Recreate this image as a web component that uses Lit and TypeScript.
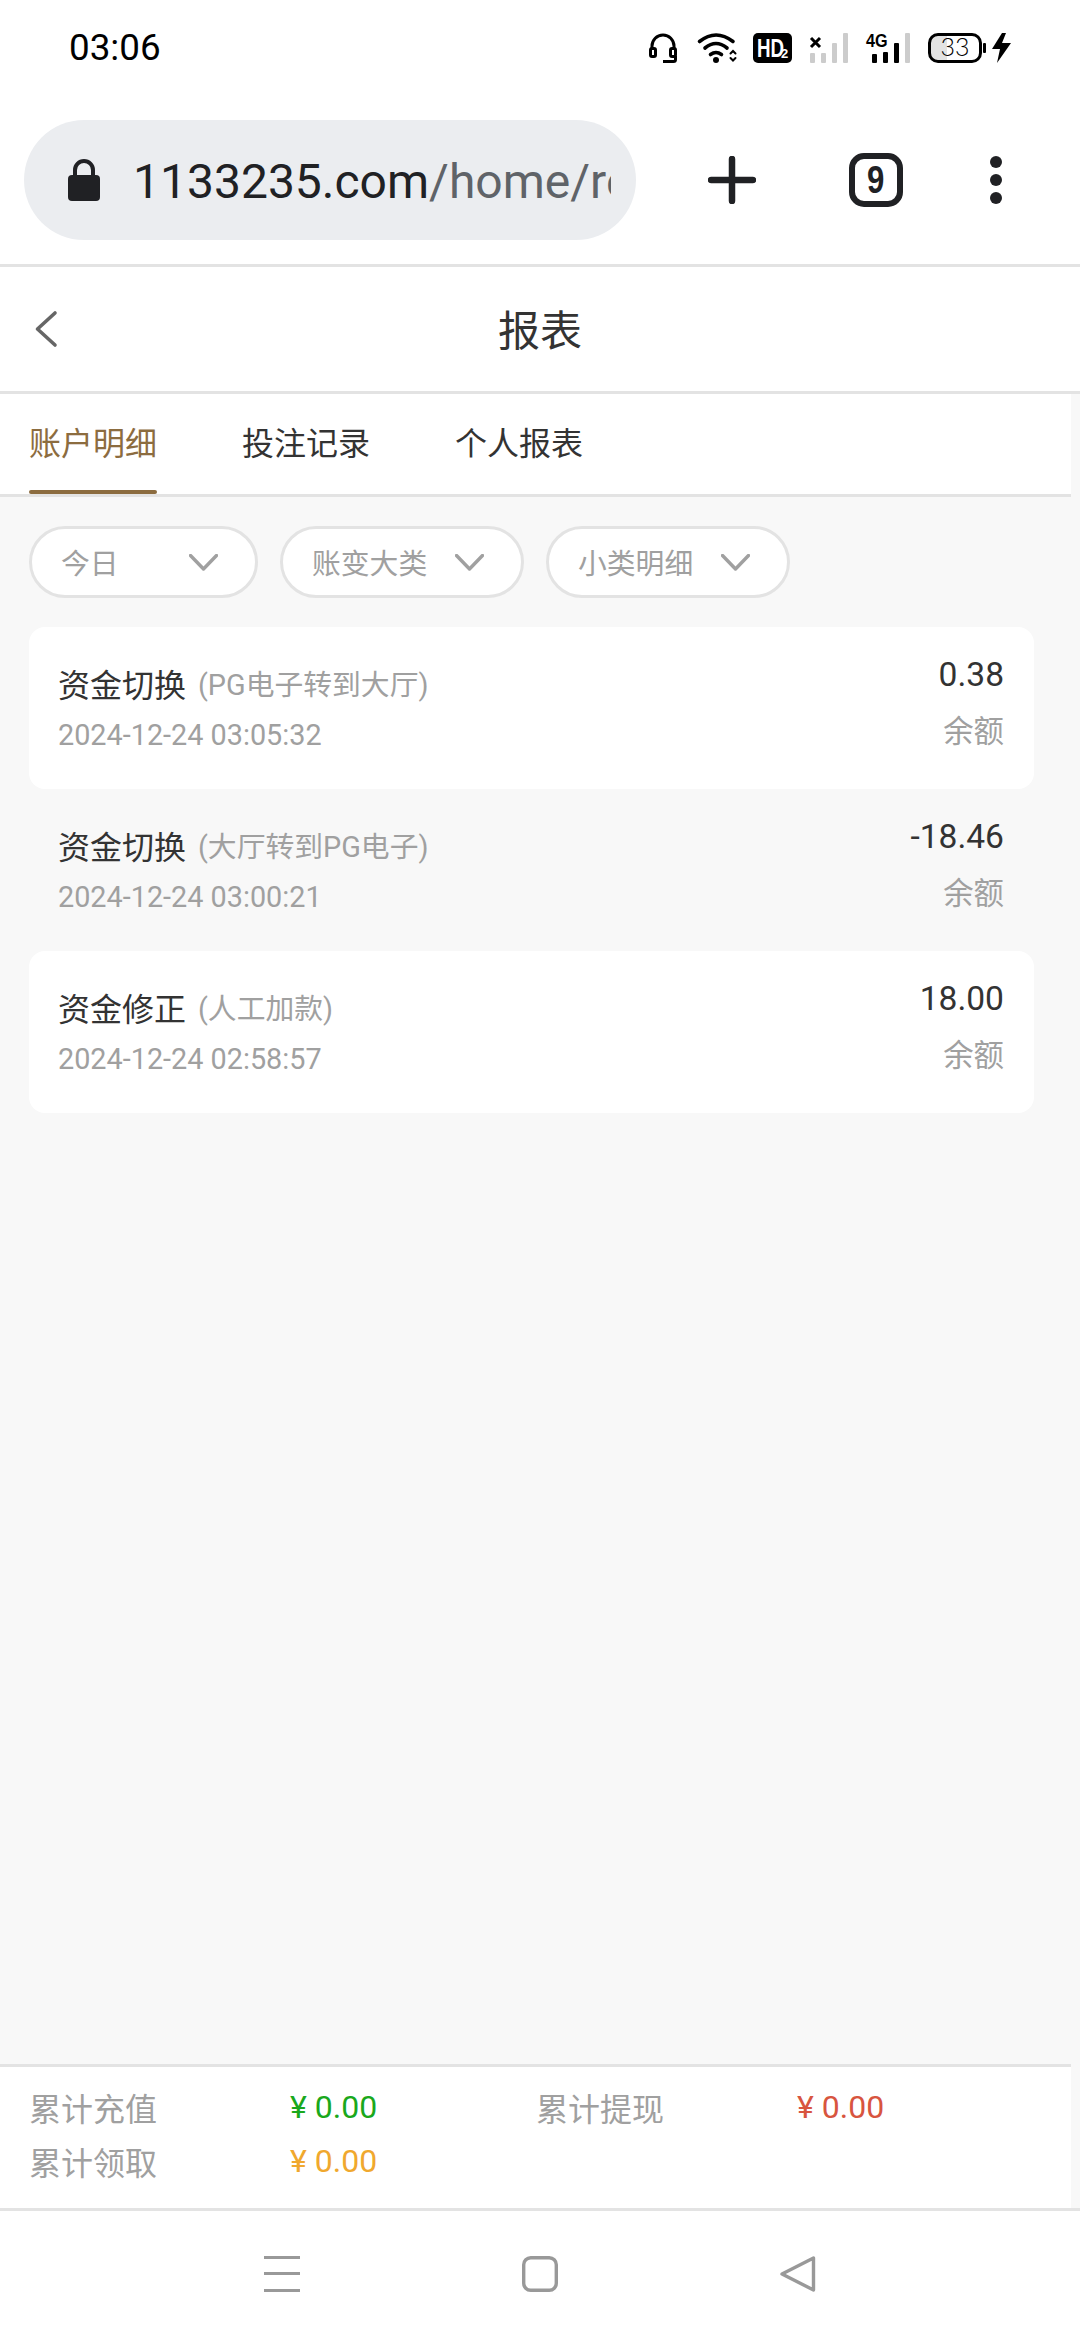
import { LitElement, html, css } from 'lit';
import { customElement, state } from 'lit/decorators.js';

const chevron = html`<svg class="chevron" viewBox="0 0 29 17" fill="none">
  <path d="M1.5 1.5 14.5 15 27.5 1.5" stroke="#a0a0a0" stroke-width="3.4" stroke-linejoin="round" stroke-linecap="round" />
</svg>`;

@customElement('app-root')
export class AppRoot extends LitElement {
    @state() tabs = ['账户明细', '投注记录', '个人报表'];
    @state() activeTab = 0;
    @state() filters = ['今日', '账变大类', '小类明细'];

    @state() records = [
        { title: '资金切换', note: '(PG电子转到大厅)', time: '2024-12-24 03:05:32', amount: '0.38', striped: true },
        { title: '资金切换', note: '(大厅转到PG电子)', time: '2024-12-24 03:00:21', amount: '-18.46', striped: false },
        { title: '资金修正', note: '(人工加款)', time: '2024-12-24 02:58:57', amount: '18.00', striped: true },
    ];

    @state() totals = [
        { label: '累计充值', value: '¥ 0.00', tone: 'green' },
        { label: '累计提现', value: '¥ 0.00', tone: 'red' },
        { label: '累计领取', value: '¥ 0.00', tone: 'orange' },
    ];

    static styles = css`
        :host {
            display: flex;
            flex-direction: column;
            width: 1080px;
            height: 2340px;
            overflow: hidden;
            background: #f8f8f8;
            color: #333;
            font-family: Roboto, "Noto Sans CJK SC", sans-serif;
        }

        /* system status bar */
        .status {
            display: flex;
            justify-content: space-between;
            height: 120px;
            box-sizing: border-box;
            padding: 33px 68px 0 69px;
            background: #fff;
            color: #000;
        }
        .time {
            font-size: 36.8px;
            line-height: 30px;
        }
        .status-icons {
            display: flex;
            gap: 16px;
            height: 30px;
        }
        .status-icons svg {
            display: block;
            height: 30px;
            overflow: visible;
        }
        .icon-headset { width: 33px; }
        .icon-wifi { width: 39px; }
        .icon-hd { width: 39px; }
        .icon-sim { width: 42px; }
        .icon-lte { width: 46px; }
        .icon-battery { width: 84px; }
        .narrow {
            font-family: "Liberation Sans", sans-serif;
            font-weight: 700;
        }
        .level {
            font-family: Lato, Roboto, sans-serif;
            font-weight: 300;
        }

        /* browser toolbar */
        .toolbar {
            display: flex;
            align-items: center;
            height: 147px;
            box-sizing: border-box;
            padding: 0 0 24px 24px;
            background: #fff;
            border-bottom: 3px solid #e3e3e3;
        }
        .address {
            display: flex;
            align-items: center;
            flex: none;
            width: 612px;
            height: 120px;
            box-sizing: border-box;
            padding-left: 44px;
            border-radius: 60px;
            background: #ebedf0;
        }
        .lock {
            flex: none;
            width: 32px;
            height: 42px;
            margin-right: 33px;
        }
        .url {
            width: 478px;
            padding-top: 3px;
            overflow: hidden;
            white-space: nowrap;
            font-size: 48px;
            color: #202124;
        }
        .url span {
            color: #5f6368;
        }
        .action {
            display: flex;
            align-items: center;
            justify-content: center;
            flex: none;
            width: 144px;
        }
        .action.first {
            margin-left: 24px;
        }
        .action.more {
            width: 96px;
        }
        .tab-count {
            display: flex;
            align-items: center;
            justify-content: center;
            width: 54px;
            height: 54px;
            box-sizing: border-box;
            border: 6px solid #202124;
            border-radius: 15px;
            color: #202124;
            font-family: "Liberation Sans", sans-serif;
            font-size: 38px;
            font-weight: 700;
            line-height: 1;
        }
        .tab-count span {
            display: block;
            transform: scaleX(0.82);
        }

        /* page header */
        .header {
            display: grid;
            grid-template-columns: 1fr auto 1fr;
            align-items: center;
            height: 127px;
            box-sizing: border-box;
            background: #fff;
            border-bottom: 3px solid #e3e3e3;
        }
        .back {
            display: block;
            width: 24px;
            height: 38px;
            margin-left: 34px;
        }
        .title {
            padding-bottom: 4px;
            font-size: 42px;
        }

        /* tabs */
        .tabs {
            display: flex;
            gap: 85px;
            width: 1071px;
            height: 103px;
            box-sizing: border-box;
            padding-left: 29px;
            background: #fff;
            border-bottom: 3px solid #e3e3e3;
        }
        .tab {
            display: flex;
            flex-direction: column;
            width: 128px;
            font-size: 32px;
        }
        .tab-label {
            flex: 1;
            display: flex;
            align-items: center;
            padding-bottom: 2px;
        }
        .tab::after {
            content: "";
            height: 4px;
            border-radius: 2px;
        }
        .tab.active {
            color: #8c6c3f;
        }
        .tab.active::after {
            background: #8c6c3f;
        }

        /* filter pills */
        .filters {
            display: flex;
            gap: 22px;
            padding: 29px 0 0 29px;
        }
        .filter {
            display: flex;
            align-items: center;
            justify-content: space-between;
            width: 244px;
            height: 72px;
            box-sizing: border-box;
            padding: 0 37px 0 29px;
            border: 3px solid #e3e3e3;
            border-radius: 36px;
            background: #fff;
            color: #a0a0a0;
            font-size: 28.8px;
        }
        .filter span {
            padding-bottom: 2px;
        }
        .filter.short {
            width: 229px;
        }
        .chevron {
            display: block;
            width: 29px;
            height: 17px;
        }

        /* record list */
        .list {
            flex: 1;
            width: 1005px;
            padding: 29px 0 0 29px;
        }
        .card {
            display: flex;
            justify-content: space-between;
            height: 162px;
            box-sizing: border-box;
            padding: 22px 30px 22px 29px;
            border-radius: 16px;
        }
        .card.striped {
            background: #fff;
        }
        .info {
            padding-top: 8px;
        }
        .info-title {
            display: flex;
            align-items: center;
            gap: 12px;
            height: 52px;
            font-size: 32px;
        }
        .note {
            padding-bottom: 2px;
            color: #a0a0a0;
            font-size: 28.8px;
        }
        .time-stamp {
            color: #a0a0a0;
            font-size: 28.8px;
            line-height: 52px;
        }
        .money {
            text-align: right;
        }
        .amount {
            font-size: 33.6px;
            line-height: 52px;
        }
        .balance {
            color: #a0a0a0;
            font-size: 30.4px;
            line-height: 62px;
        }

        /* totals */
        .totals {
            border-bottom: 3px solid #e3e3e3;
        }
        .totals-grid {
            display: grid;
            grid-template-columns: 261px 246px 261px 1fr;
            grid-auto-rows: 54px;
            align-items: center;
            box-sizing: border-box;
            width: 1071px;
            padding: 13px 0 20px 29px;
            border-top: 3px solid #e3e3e3;
            background: #fff;
            font-size: 32px;
            color: #a0a0a0;
        }
        .green { color: #1aa81c; }
        .red { color: #d8553f; }
        .orange { color: #f0a82e; }

        /* system navigation */
        .nav {
            display: flex;
            justify-content: center;
            align-items: center;
            gap: 222px;
            height: 129px;
            box-sizing: border-box;
            padding-bottom: 3px;
            background: #fff;
        }
        .nav svg {
            display: block;
            width: 36px;
            height: 36px;
        }
    `;

    renderStatusIcons() {
        return html`<div class="status-icons">
            <svg class="icon-headset" viewBox="0 0 33 30" fill="none" stroke="#000" stroke-width="3">
                <path d="M3 17V13a11 11 0 0 1 22 0v4" />
                <rect x="1.5" y="15.5" width="5" height="8" rx="1.5" />
                <rect x="21.5" y="15.5" width="5" height="8" rx="1.5" />
                <path d="M14 28.5h10.500a2 2 0 0 0 2-2V23" />
            </svg>
            <svg class="icon-wifi" viewBox="0 0 39 30" fill="none" stroke="#000" stroke-linecap="round">
                <path d="M1.5 8.5Q18-4.5 35 8.5" stroke-width="3.6" />
                <path d="M7 15Q18 6 29 15" stroke-width="3.6" />
                <path d="M12.5 21.5Q18 17.5 23.5 21.5" stroke-width="3.6" />
                <circle cx="18" cy="27" r="3" fill="#000" stroke="none" />
                <path d="M32.5 20.5 35 18l2.5 2.5M32.5 25 35 27.5 37.5 25" stroke-width="2" />
            </svg>
            <svg class="icon-hd" viewBox="0 0 39 30">
                <rect width="39" height="30" rx="5" fill="#000" />
                <text class="narrow" transform="translate(4 24) scale(0.75 1)" fill="#fff" font-size="25">HD</text>
                <text class="narrow" x="28" y="24.5" fill="#fff" font-size="13">2</text>
            </svg>
            <svg class="icon-sim" viewBox="0 0 42 30">
                <g fill="#ccc">
                    <rect x="2" y="20" width="5" height="10" rx="1" />
                    <rect x="13" y="20" width="5" height="10" rx="1" />
                    <rect x="24" y="10" width="5" height="20" rx="1" />
                    <rect x="35" y="0" width="5" height="30" rx="1" />
                </g>
                <path d="M3 5l9 9M12 5l-9 9" stroke="#000" stroke-width="3" />
            </svg>
            <svg class="icon-lte" viewBox="-1 0 46 30">
                <text class="narrow" transform="translate(-1 14) scale(0.9 1)" fill="#000" font-size="18">4G</text>
                <g fill="#000">
                    <rect x="5" y="21" width="5" height="9" rx="1" />
                    <rect x="16" y="19" width="5" height="11" rx="1" />
                    <rect x="27" y="10" width="5" height="20" rx="1" />
                </g>
                <rect x="38" y="0" width="5" height="30" rx="1" fill="#ccc" />
            </svg>
            <svg class="icon-battery" viewBox="0 0 84 30">
                <path d="M10 1.5H19V28.5H10a8 8 0 0 1-8-8V9.5a8 8 0 0 1 8-8Z" fill="#e3e3e3" />
                <rect x="1.5" y="1.5" width="51" height="27" rx="8.5" fill="none" stroke="#000" stroke-width="3" />
                <rect x="55" y="10" width="3" height="10" rx="1" fill="#000" />
                <text class="level" x="27" y="23" fill="#000" font-size="25" text-anchor="middle">33</text>
                <path d="M74 0 64 16h8L69 30 83 10H74L78 0Z" fill="#000" />
            </svg>
        </div>`;
    }

    render() {
        return html`
            <div class="status">
                <div class="time">03:06</div>
                ${this.renderStatusIcons()}
            </div>

            <div class="toolbar">
                <div class="address">
                    <svg class="lock" viewBox="0 0 32 42">
                        <path d="M7 19V11a9 9 0 0 1 18 0v8" fill="none" stroke="#202124" stroke-width="4" />
                        <rect y="16" width="32" height="26" rx="4" fill="#202124" />
                    </svg>
                    <div class="url">1133235.com<span>/home/report</span></div>
                </div>
                <div class="action first">
                    <svg width="48" height="48" viewBox="0 0 48 48">
                        <path d="M24 3v42M3 24h42" stroke="#202124" stroke-width="6.5" stroke-linecap="round" />
                    </svg>
                </div>
                <div class="action"><div class="tab-count"><span>9</span></div></div>
                <div class="action more">
                    <svg width="12" height="48" viewBox="0 0 12 48" fill="#202124">
                        <circle cx="6" cy="6" r="6" />
                        <circle cx="6" cy="24" r="6" />
                        <circle cx="6" cy="42" r="6" />
                    </svg>
                </div>
            </div>

            <div class="header">
                <svg class="back" viewBox="0 0 24 38" fill="none">
                    <path d="M21 3 3.5 19 21 35" stroke="#666" stroke-width="3.6" stroke-linecap="round" stroke-linejoin="round" />
                </svg>
                <div class="title">报表</div>
            </div>

            <div class="tabs">
                ${this.tabs.map((tab, i) => html`
                    <div class="tab ${i === this.activeTab ? 'active' : ''}">
                        <div class="tab-label">${tab}</div>
                    </div>
                `)}
            </div>

            <div class="filters">
                ${this.filters.map((name) => html`
                    <div class="filter ${name.length < 3 ? 'short' : ''}">
                        <span>${name}</span>${chevron}
                    </div>
                `)}
            </div>

            <div class="list">
                ${this.records.map((row) => html`
                    <div class="card ${row.striped ? 'striped' : ''}">
                        <div class="info">
                            <div class="info-title">${row.title}<span class="note">${row.note}</span></div>
                            <div class="time-stamp">${row.time}</div>
                        </div>
                        <div class="money">
                            <div class="amount">${row.amount}</div>
                            <div class="balance">余额</div>
                        </div>
                    </div>
                `)}
            </div>

            <div class="totals">
                <div class="totals-grid">
                    ${this.totals.map((item) => html`
                        <div>${item.label}</div>
                        <div class=${item.tone}>${item.value}</div>
                    `)}
                </div>
            </div>

            <div class="nav">
                <svg viewBox="0 0 36 36" fill="#999">
                    <rect y="0" width="36" height="3" />
                    <rect y="16" width="36" height="3" />
                    <rect y="33" width="36" height="3" />
                </svg>
                <svg viewBox="0 0 36 36" fill="none" stroke="#999" stroke-width="3.4">
                    <rect x="1.7" y="1.7" width="32.6" height="32.6" rx="7" />
                </svg>
                <svg viewBox="0 0 36 36" fill="none" stroke="#999" stroke-width="3.4" stroke-linejoin="round">
                    <path d="M2 18 33.5 2V34Z" />
                </svg>
            </div>
        `;
    }
}
